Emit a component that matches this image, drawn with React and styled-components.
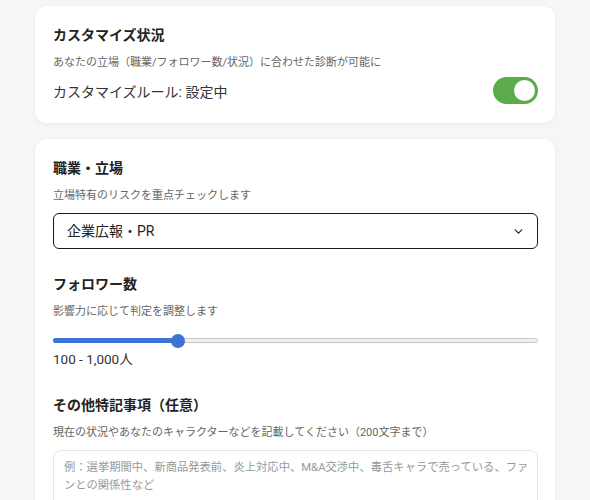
import { useState } from "react";
import styled, { createGlobalStyle } from "styled-components";

const GlobalStyle = createGlobalStyle`
  body {
    margin: 0;
    background: #f5f6f8;
    font-family: "Roboto", "Noto Sans CJK JP", sans-serif;
    color: #222;
  }
`;

const STEPS = ["0 - 100人", "100 - 1,000人", "1,000 - 1万人", "1万 - 10万人", "10万人以上"];

const App = () => {
  const [enabled, setEnabled] = useState(true);
  const [follower, setFollower] = useState(1);
  const [job, setJob] = useState("pr");
  const [note, setNote] = useState("");

  return (
    <>
      <GlobalStyle />
      <Page>
        <Card>
          <Title>カスタマイズ状況</Title>
          <Hint>あなたの立場（職業/フォロワー数/状況）に合わせた診断が可能に</Hint>
          <StatusRow>
            <StatusText>カスタマイズルール: {enabled ? "設定中" : "未設定"}</StatusText>
            <Toggle $on={enabled} onClick={() => setEnabled(!enabled)}>
              <Knob $on={enabled} />
            </Toggle>
          </StatusRow>
        </Card>

        <Card>
          <Section>
            <Title>職業・立場</Title>
            <Hint>立場特有のリスクを重点チェックします</Hint>
            <SelectWrap>
              <Select value={job} onChange={(e) => setJob(e.target.value)}>
                <option value="pr">企業広報・PR</option>
                <option value="politician">政治家</option>
                <option value="influencer">インフルエンサー</option>
                <option value="other">その他</option>
              </Select>
              <Chevron viewBox="0 0 24 24">
                <path d="M6 9l6 6 6-6" />
              </Chevron>
            </SelectWrap>
          </Section>

          <Section>
            <Title>フォロワー数</Title>
            <Hint>影響力に応じて判定を調整します</Hint>
            <Slider>
              <Track />
              <Fill style={{ width: `calc(7px + (100% - 14px) * ${follower / 4})` }} />
              <Thumb style={{ left: `calc((100% - 14px) * ${follower / 4})` }} />
              <RangeInput
                type="range"
                min="0"
                max="4"
                value={follower}
                onChange={(e) => setFollower(Number(e.target.value))}
              />
            </Slider>
            <Value>{STEPS[follower]}</Value>
          </Section>

          <Section>
            <Title>その他特記事項（任意）</Title>
            <Hint>現在の状況やあなたのキャラクターなどを記載してください（200文字まで）</Hint>
            <Note
              rows={4}
              maxLength={200}
              value={note}
              onChange={(e) => setNote(e.target.value)}
              placeholder="例：選挙期間中、新商品発表前、炎上対応中、M&A交渉中、毒舌キャラで売っている、ファンとの関係性など"
            />
          </Section>
        </Card>
      </Page>
    </>
  );
};

export default App;

const Page = styled.div`
  max-width: 520px;
  margin: 0 auto;
  padding: 6px 0 24px;
  display: flex;
  flex-direction: column;
  gap: 16px;
`;
const Card = styled.div`
  background: #fff;
  border-radius: 12px;
  box-shadow: 0 1px 4px rgba(0, 0, 0, 0.06);
  padding: 20px 17px 19px 18px;
  display: flex;
  flex-direction: column;
`;
const Section = styled.div`
  display: flex;
  flex-direction: column;
  margin-bottom: 26px;
`;
const Title = styled.h3`
  margin: 0;
  font-size: 14px;
  font-weight: 700;
  line-height: 18px;
  color: #222;
`;
const Hint = styled.p`
  margin: 11px 0 9px;
  font-size: 11px;
  line-height: 16px;
  color: #666;
`;
const StatusRow = styled.div`
  display: flex;
  align-items: center;
  justify-content: space-between;
  margin-top: -3px;
`;
const StatusText = styled.span`
  font-size: 14px;
  color: #333;
`;
const Toggle = styled.button`
  width: 45px;
  height: 27px;
  border: none;
  border-radius: 14px;
  padding: 3px;
  background: ${(p) => (p.$on ? "#5aad4a" : "#ccc")};
  display: flex;
  cursor: pointer;
`;
const Knob = styled.span`
  width: 21px;
  height: 21px;
  border-radius: 50%;
  background: #fff;
  margin-left: ${(p) => (p.$on ? "18px" : "0")};
  transition: margin 0.2s;
`;
const SelectWrap = styled.div`
  position: relative;
`;
const Select = styled.select`
  width: 100%;
  height: 36px;
  appearance: none;
  border: 1.5px solid #1a1a1a;
  border-radius: 6px;
  background: #fff;
  padding: 0 13px;
  font-family: inherit;
  font-size: 14px;
  color: #222;
  outline: none;
`;
const Chevron = styled.svg`
  position: absolute;
  right: 13px;
  top: 12px;
  width: 13px;
  height: 13px;
  fill: none;
  stroke: #222;
  stroke-width: 2.2;
  stroke-linecap: round;
  stroke-linejoin: round;
  pointer-events: none;
`;
const Slider = styled.div`
  position: relative;
  height: 14px;
  margin: 5px 0 0;
`;
const Track = styled.div`
  position: absolute;
  left: 0;
  right: 0;
  top: 4px;
  height: 5px;
  border-radius: 3px;
  background: #efefef;
  border: 1px solid #c8c8c8;
  box-sizing: border-box;
`;
const Fill = styled.div`
  position: absolute;
  left: 0;
  top: 4px;
  height: 5px;
  border-radius: 3px;
  background: #3b74d2;
`;
const Thumb = styled.div`
  position: absolute;
  top: 0;
  width: 14px;
  height: 14px;
  border-radius: 50%;
  background: #3b74d2;
`;
const RangeInput = styled.input`
  position: absolute;
  inset: 0;
  width: 100%;
  margin: 0;
  opacity: 0;
  cursor: pointer;
`;
const Value = styled.div`
  font-size: 13.5px;
  color: #333;
  margin-bottom: 2px;
`;
const Note = styled.textarea`
  box-sizing: border-box;
  width: 100%;
  border: 1px solid #e6e6e6;
  border-radius: 8px;
  padding: 8px 6px 8px 10px;
  font-family: inherit;
  font-size: 11.3px;
  line-height: 18px;
  color: #333;
  resize: none;
  outline: none;
  &::placeholder {
    color: #999;
  }
`;
